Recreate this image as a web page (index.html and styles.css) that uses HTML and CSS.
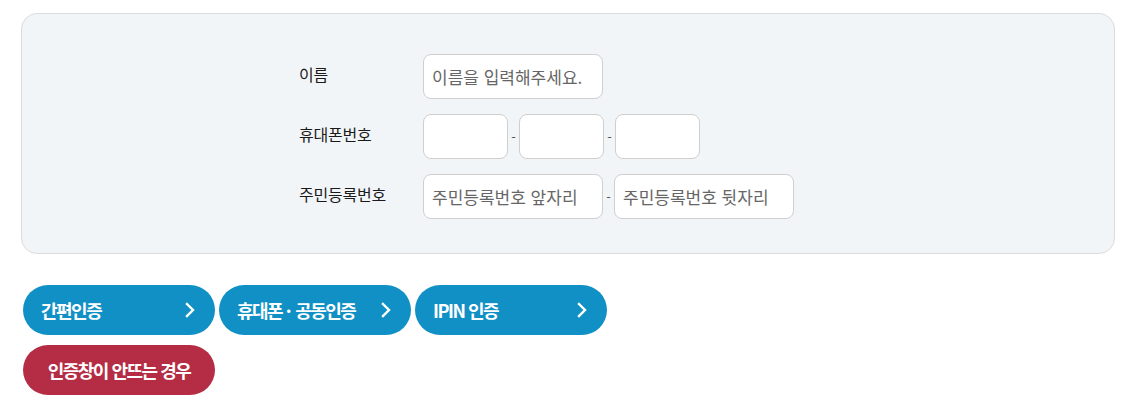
FILE: index.html
```html
<!DOCTYPE html>
<html lang="ko">
<head>
<meta charset="utf-8">
<title>본인인증</title>
<link rel="stylesheet" href="styles.css">
</head>
<body>
<div class="page">
  <div class="form-box">
    <div class="form">
      <div class="row">
        <div class="label">이름</div>
        <div class="fields">
          <input class="inp inp-lg" type="text" placeholder="이름을 입력해주세요.">
        </div>
      </div>
      <div class="row">
        <div class="label">휴대폰번호</div>
        <div class="fields">
          <input class="inp inp-sm" type="text">
          <span class="dash">-</span>
          <input class="inp inp-sm" type="text">
          <span class="dash">-</span>
          <input class="inp inp-sm" type="text">
        </div>
      </div>
      <div class="row">
        <div class="label">주민등록번호</div>
        <div class="fields">
          <input class="inp inp-lg" type="text" placeholder="주민등록번호 앞자리">
          <span class="dash">-</span>
          <input class="inp inp-lg" type="text" placeholder="주민등록번호 뒷자리">
        </div>
      </div>
    </div>
  </div>
  <div class="buttons">
    <div class="btn-row">
      <a class="btn btn-blue" href="#"><span>간편인증</span><svg class="chev" viewBox="0 0 10 16"><path d="M2 2 L8 8 L2 14" fill="none" stroke="#fff" stroke-width="2.4" stroke-linecap="square"/></svg></a>
      <a class="btn btn-blue" href="#"><span>휴대폰 <span class="dot">·</span> 공동인증</span><svg class="chev" viewBox="0 0 10 16"><path d="M2 2 L8 8 L2 14" fill="none" stroke="#fff" stroke-width="2.4" stroke-linecap="square"/></svg></a>
      <a class="btn btn-blue" href="#"><span>IPIN 인증</span><svg class="chev" viewBox="0 0 10 16"><path d="M2 2 L8 8 L2 14" fill="none" stroke="#fff" stroke-width="2.4" stroke-linecap="square"/></svg></a>
    </div>
    <div class="btn-row">
      <a class="btn btn-red" href="#"><span>인증창이 안뜨는 경우</span></a>
    </div>
  </div>
</div>
</body>
</html>
```
FILE: styles.css
```css
html, body {
  margin: 0;
  padding: 0;
  background: #fff;
}
body {
  font-family: "Noto Sans CJK KR", "Noto Sans", sans-serif;
  color: #222;
}
.page {
  padding: 13px 0 0 21px;
}
.form-box {
  box-sizing: border-box;
  width: 1094px;
  height: 241px;
  background: #f2f5f8;
  border: 1px solid #dcdcdc;
  border-radius: 16px;
  padding: 40px 0 0 277px;
}
.form {
  display: flex;
  flex-direction: column;
  gap: 15px;
}
.row {
  display: flex;
  align-items: flex-start;
}
.label {
  width: 124px;
  font-size: 16px;
  line-height: 20px;
  padding-top: 10px;
  letter-spacing: -0.2px;
  color: #1a1a1a;
}
.fields {
  display: flex;
  align-items: center;
}
.inp {
  box-sizing: border-box;
  height: 45px;
  border: 1px solid #cfcfcf;
  border-radius: 8px;
  background: #fff;
  padding: 0 8px;
  font-family: "Noto Sans CJK KR", "Noto Sans", sans-serif;
  font-size: 17px;
  color: #333;
  outline: none;
}
.inp::placeholder {
  color: #666;
}
.inp-lg { width: 180px; }
.inp-sm { width: 85px; }
.dash {
  width: 11px;
  text-align: center;
  font-size: 13px;
  color: #555;
  line-height: 1;
}
.buttons {
  padding: 31px 0 0 2px;
  display: flex;
  flex-direction: column;
  gap: 10px;
}
.btn-row {
  display: flex;
  gap: 4px;
}
.btn {
  box-sizing: border-box;
  width: 192px;
  height: 50px;
  border-radius: 25px;
  display: flex;
  align-items: center;
  justify-content: space-between;
  padding: 0 20px 0 18px;
  text-decoration: none;
  color: #fff;
  font-size: 18px;
  font-weight: 700;
  letter-spacing: -1.5px;
}
.dot {
  letter-spacing: 0;
}
.btn-blue { background: #1190c5; }
.btn-red {
  background: #b52c45;
  justify-content: center;
  padding: 0;
}
.chev {
  width: 10px;
  height: 16px;
  display: block;
}
```
